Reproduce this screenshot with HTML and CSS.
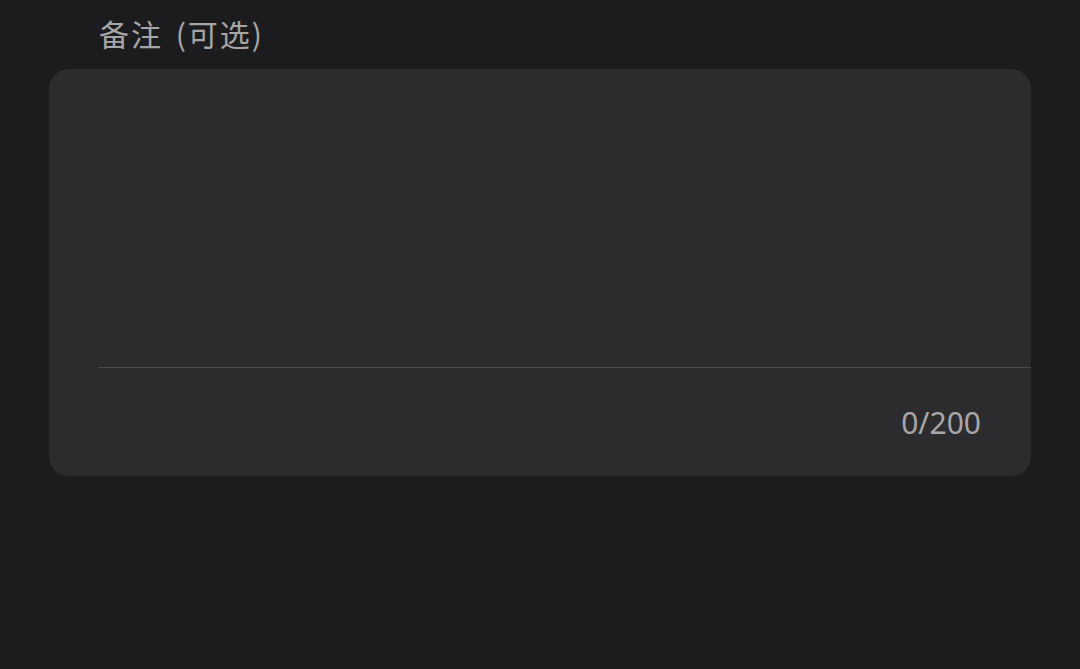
FILE: index.html
```html
<!DOCTYPE html>
<html lang="zh-CN">
<head>
    <meta charset="UTF-8">
    <meta name="viewport" content="width=device-width, initial-scale=1.0">
    <title>备注</title>
    <link rel="stylesheet" href="styles.css">
</head>
<body>
    <div class="page">
        <div class="field-label">备注 (可选)</div>
        <div class="note-card">
            <div class="note-input">
                <textarea class="note-text" maxlength="200"></textarea>
            </div>
            <div class="note-footer">
                <span class="note-count">0/200</span>
            </div>
        </div>
    </div>
</body>
</html>
```

FILE: styles.css
```css
body, html {
    margin: 0;
    padding: 0;
    height: 100%;
    background: #1c1c1e;
    font-family: "Noto Sans", "Noto Sans CJK SC", sans-serif;
    overflow: hidden;
}
.page {
    padding: 0 49px;
}
.field-label {
    padding: 11px 0 0 50px;
    height: 69px;
    box-sizing: border-box;
    font-family: "Noto Sans CJK SC", sans-serif;
    font-size: 30px;
    line-height: 44px;
    letter-spacing: 2px;
    word-spacing: 4px;
    color: #a6a6a8;
}
.note-card {
    background: #2c2c2e;
    border-radius: 20px;
    height: 407px;
    display: flex;
    flex-direction: column;
}
.note-input {
    height: 299px;
    margin-left: 49px;
    border-bottom: 1px solid #4a4a4c;
    box-sizing: border-box;
}
.note-text {
    width: 100%;
    height: 100%;
    background: transparent;
    border: none;
    outline: none;
    resize: none;
    color: #e5e5e7;
    font: inherit;
}
.note-footer {
    flex: 1;
    display: flex;
    justify-content: flex-end;
    align-items: flex-start;
    padding: 35px 50px 0 0;
}
.note-count {
    font-size: 30px;
    line-height: 40px;
    color: #a6a6a8;
}
```
